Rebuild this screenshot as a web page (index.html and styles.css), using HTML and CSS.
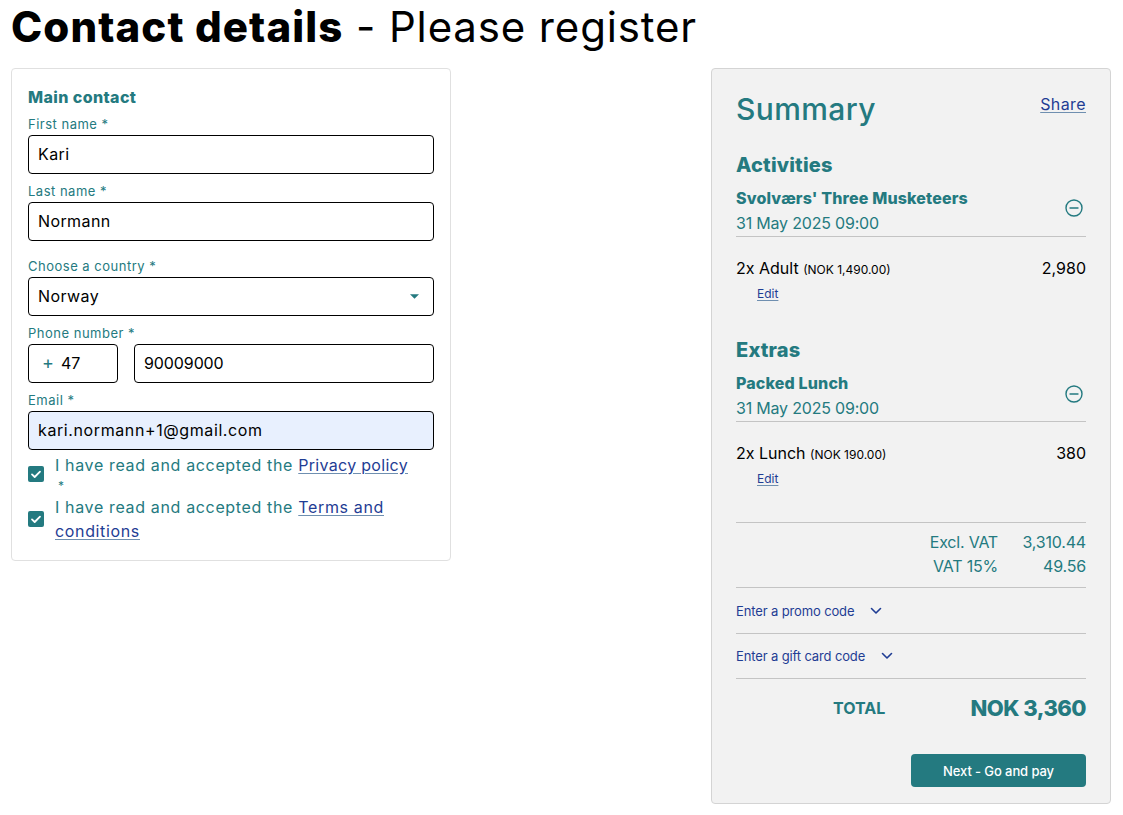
FILE: index.html
```html
<!DOCTYPE html>
<html>

<head>
    <title>Contact details</title>
    <meta name="viewport" content="width=device-width, initial-scale=1.0">
    <link rel="stylesheet" href="styles.css">
</head>

<body>
    <h1 class="page-title"><strong>Contact details</strong> - Please register</h1>

    <div class="columns">
        <!-- Contact form -->
        <form class="contact-card">
            <h2 class="card-title">Main contact</h2>

            <label class="field-label" for="first-name">First name *</label>
            <input class="text-input" id="first-name" type="text" value="Kari">

            <label class="field-label" for="last-name">Last name *</label>
            <input class="text-input" id="last-name" type="text" value="Normann">

            <label class="field-label country-label" for="country">Choose a country *</label>
            <div class="select-wrap">
                <select class="text-input select-input" id="country">
                    <option>Norway</option>
                </select>
                <svg class="select-caret" width="9" height="5" viewBox="0 0 10 5">
                    <path d="M0 0h10L5 5z" fill="#247a80"></path>
                </svg>
            </div>

            <label class="field-label" for="phone">Phone number *</label>
            <div class="phone-row">
                <div class="prefix-box">
                    <span class="prefix-plus">+</span>
                    <span>47</span>
                </div>
                <input class="text-input phone-input" id="phone" type="text" value="90009000">
            </div>

            <label class="field-label" for="email">Email *</label>
            <input class="text-input email-input" id="email" type="text" value="kari.normann+1@gmail.com">

            <div class="check-row">
                <span class="check-box">
                    <svg width="16" height="16" viewBox="0 0 16 16" fill="none" stroke="white" stroke-width="1.8"
                        stroke-linecap="round" stroke-linejoin="round">
                        <path d="M4 8.4l2.7 2.6L12 5.6"></path>
                    </svg>
                </span>
                <p class="check-text">I have read and accepted the <a class="privacy-link" href="#">Privacy policy</a><span class="check-star">*</span></p>
            </div>
            <div class="check-row">
                <span class="check-box">
                    <svg width="16" height="16" viewBox="0 0 16 16" fill="none" stroke="white" stroke-width="1.8"
                        stroke-linecap="round" stroke-linejoin="round">
                        <path d="M4 8.4l2.7 2.6L12 5.6"></path>
                    </svg>
                </span>
                <p class="check-text">I have read and accepted the <a href="#">Terms and<br>conditions</a></p>
            </div>
        </form>

        <!-- Order summary -->
        <aside class="summary-card">
            <div class="summary-head">
                <h2 class="summary-title">Summary</h2>
                <a class="share-link" href="#">Share</a>
            </div>

            <h3 class="section-title">Activities</h3>
            <div class="item-head">
                <div>
                    <div class="item-name">Svolværs' Three Musketeers</div>
                    <div class="item-date">31 May 2025 09:00</div>
                </div>
                <svg class="remove-icon" width="18" height="18" viewBox="0 0 18 18" fill="none" stroke="#247a80"
                    stroke-width="1.4" stroke-linecap="round">
                    <circle cx="9" cy="9" r="8"></circle>
                    <path d="M5 9h8"></path>
                </svg>
            </div>
            <div class="line-row">
                <span>2x Adult <small>(NOK 1,490.00)</small></span>
                <span>2,980</span>
            </div>
            <a class="edit-link" href="#">Edit</a>

            <h3 class="section-title extras-title">Extras</h3>
            <div class="item-head extras-head">
                <div>
                    <div class="item-name">Packed Lunch</div>
                    <div class="item-date">31 May 2025 09:00</div>
                </div>
                <svg class="remove-icon" width="18" height="18" viewBox="0 0 18 18" fill="none" stroke="#247a80"
                    stroke-width="1.4" stroke-linecap="round">
                    <circle cx="9" cy="9" r="8"></circle>
                    <path d="M5 9h8"></path>
                </svg>
            </div>
            <div class="line-row">
                <span>2x Lunch <small>(NOK 190.00)</small></span>
                <span>380</span>
            </div>
            <a class="edit-link" href="#">Edit</a>

            <div class="vat-block">
                <div class="vat-row"><span>Excl. VAT</span><span class="vat-value">3,310.44</span></div>
                <div class="vat-row"><span>VAT 15%</span><span class="vat-value">49.56</span></div>
            </div>

            <a class="code-row" href="#">
                Enter a promo code
                <svg width="12" height="8" viewBox="0 0 12 8" fill="none" stroke="currentColor" stroke-width="1.6"
                    stroke-linecap="round" stroke-linejoin="round">
                    <path d="M1.5 1.5L6 6l4.5-4.5"></path>
                </svg>
            </a>
            <a class="code-row" href="#">
                Enter a gift card code
                <svg width="12" height="8" viewBox="0 0 12 8" fill="none" stroke="currentColor" stroke-width="1.6"
                    stroke-linecap="round" stroke-linejoin="round">
                    <path d="M1.5 1.5L6 6l4.5-4.5"></path>
                </svg>
            </a>

            <div class="total-row">
                <span class="total-label">TOTAL</span>
                <span class="total-value">NOK 3,360</span>
            </div>

            <div class="next-row">
                <button class="next-btn" type="button">Next - Go and pay</button>
            </div>
        </aside>
    </div>
</body>

</html>
```

FILE: styles.css
```css
body {
    font-family: Inter, 'Open Sans', sans-serif;
    background-color: white;
    color: black;
    margin: 0;
    padding: 0 12px 0 11px;
}

h1, h2, h3, p {
    margin: 0;
}

a {
    color: #1f3d94;
    text-decoration-color: #6f8fb0;
    text-underline-offset: 2px;
}

.page-title {
    font-size: 42px;
    font-weight: 400;
    line-height: 54px;
    height: 68px;
    letter-spacing: 0.85px;
}

.page-title strong {
    font-weight: 800;
    letter-spacing: 1.1px;
}

.columns {
    display: flex;
    justify-content: space-between;
    align-items: flex-start;
}

/* Contact form */
.contact-card {
    width: 440px;
    height: 493px;
    box-sizing: border-box;
    padding: 16px 16px 0;
    border: 1px solid #e0e0e0;
    border-radius: 4px;
}

.card-title {
    font-size: 16px;
    font-weight: 800;
    line-height: 24px;
    letter-spacing: 0.4px;
    color: #247a80;
}

.field-label {
    display: block;
    font-size: 13px;
    line-height: 19px;
    margin-top: 8px;
    margin-bottom: 1px;
    letter-spacing: 0.5px;
    color: #247a80;
}

.card-title + .field-label {
    margin-top: 6px;
}

.country-label {
    margin-top: 16px;
}

.text-input {
    display: block;
    width: 100%;
    height: 39px;
    box-sizing: border-box;
    padding: 0 9px 2px;
    border: 1px solid black;
    border-radius: 4px;
    background-color: white;
    color: black;
    font-family: inherit;
    font-size: 16px;
    letter-spacing: 0.4px;
}

.select-wrap {
    position: relative;
}

.select-input {
    appearance: none;
}

.select-caret {
    position: absolute;
    right: 15px;
    top: 17px;
}

.phone-row {
    display: flex;
    gap: 16px;
}

.phone-input {
    letter-spacing: -0.1px;
}

.prefix-box {
    flex: none;
    display: flex;
    align-items: center;
    gap: 7px;
    width: 90px;
    height: 39px;
    box-sizing: border-box;
    padding: 0 0 2px 13px;
    border: 1px solid black;
    border-radius: 4px;
    font-size: 16px;
}

.prefix-plus {
    font-size: 18px;
    color: #247a80;
}

.email-input {
    background-color: #e8f0fe;
    letter-spacing: 0.6px;
}

.check-row {
    display: flex;
    align-items: center;
    margin-top: 3px;
}

.check-row + .check-row {
    margin-top: 0;
}

.check-box {
    flex: none;
    width: 16px;
    height: 16px;
    margin-right: 11px;
    border-radius: 2px;
    background-color: #247a80;
}

.check-box svg {
    display: block;
}

.check-text {
    font-size: 16px;
    line-height: 24px;
    letter-spacing: 0.65px;
    color: #247a80;
}

.privacy-link {
    letter-spacing: 0.3px;
}

.check-star {
    display: block;
    height: 18px;
    line-height: 18px;
    margin-left: 3px;
    font-size: 12px;
}

/* Order summary */
.summary-card {
    width: 400px;
    height: 736px;
    box-sizing: border-box;
    padding: 20px 24px 0;
    border: 1px solid #d4d4d4;
    border-radius: 4px;
    background-color: #f2f2f2;
}

.summary-head {
    display: flex;
    justify-content: space-between;
    align-items: flex-start;
    height: 60px;
}

.summary-title {
    font-size: 30px;
    font-weight: 500;
    line-height: 40px;
    letter-spacing: 0.4px;
    color: #247a80;
}

.share-link {
    font-size: 16px;
    line-height: 30px;
    letter-spacing: 0.4px;
}

.section-title {
    font-size: 20px;
    font-weight: 800;
    line-height: 32px;
    letter-spacing: 0.2px;
    color: #247a80;
}

.extras-title {
    margin-top: 31px;
}

.item-head {
    display: flex;
    justify-content: space-between;
    align-items: flex-start;
    padding-top: 5px;
    padding-right: 3px;
    border-bottom: 1px solid #c4c4c4;
}

.remove-icon {
    margin-top: 13px;
}

.extras-head {
    padding-top: 6px;
}

.extras-head .item-name {
    line-height: 23px;
}

.item-name {
    font-size: 16px;
    font-weight: 800;
    line-height: 24px;
    letter-spacing: 0.15px;
    color: #247a80;
}

.item-date {
    font-size: 16px;
    line-height: 26px;
    letter-spacing: -0.2px;
    color: #247a80;
}

.line-row {
    display: flex;
    justify-content: space-between;
    margin-top: 19px;
    font-size: 16px;
    line-height: 24px;
}

.line-row small {
    font-size: 12px;
}

.edit-link {
    display: block;
    width: fit-content;
    margin: 3px 0 0 21px;
    font-size: 12px;
    line-height: 18px;
}

.vat-block {
    margin-top: 34px;
    padding: 7px 0 9px;
    border-top: 1px solid #c4c4c4;
    border-bottom: 1px solid #c4c4c4;
}

.vat-row {
    display: flex;
    justify-content: flex-end;
    font-size: 16px;
    line-height: 24px;
    letter-spacing: -0.2px;
    color: #247a80;
}

.vat-value {
    width: 88px;
    text-align: right;
}

.code-row {
    display: flex;
    align-items: center;
    gap: 16px;
    height: 45px;
    border-bottom: 1px solid #c4c4c4;
    font-size: 13px;
    letter-spacing: -0.13px;
    text-decoration: none;
}

.code-row + .code-row {
    height: 44px;
}

.total-row {
    display: flex;
    justify-content: space-between;
    align-items: center;
    height: 58px;
    padding-left: 97px;
    color: #247a80;
}

.total-label {
    font-size: 16px;
    font-weight: 700;
}

.total-value {
    font-size: 22px;
    font-weight: 800;
    letter-spacing: -0.55px;
}

.next-row {
    display: flex;
    justify-content: flex-end;
    margin-top: 17px;
}

.next-btn {
    width: 175px;
    height: 33px;
    border: none;
    border-radius: 4px;
    background-color: #247a80;
    color: white;
    font-family: inherit;
    font-size: 13px;
    font-weight: 500;
    letter-spacing: -0.1px;
}
```
